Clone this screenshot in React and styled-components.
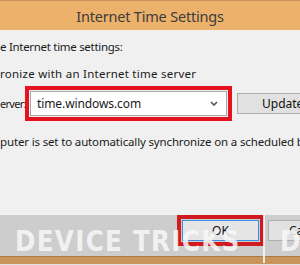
import React from "react";
import styled, { createGlobalStyle } from "styled-components";

const Global = createGlobalStyle`
  html, body { margin: 0; padding: 0; }
  body { width: 300px; height: 265px; overflow: hidden; background: #f0f0f0; }
  #root { width: 300px; height: 265px; }
`;

const Window = styled.div`
  position: relative;
  width: 300px;
  height: 265px;
  display: flex;
  flex-direction: column;
  overflow: hidden;
  font-family: "Noto Sans", "Open Sans", sans-serif;
  color: #1a1a1a;
  background: #f0f0f0;
`;

const TitleBar = styled.div`
  height: 29px;
  flex: none;
  background: #ecb16b;
  border-top: 1px solid #c4925a;
  display: flex;
  align-items: center;
  justify-content: center;
  font-size: 14.5px;
  color: #3c3c3c;
  letter-spacing: -0.2px;
`;

const Body = styled.div`
  flex: 1;
  display: flex;
  flex-direction: column;
  white-space: nowrap;
  overflow: hidden;
  font-size: 11.5px;
`;

const Line = styled.div`
  height: 16px;
  line-height: 16px;
  margin-top: ${(p) => p.$mt}px;
  letter-spacing: ${(p) => p.$ls}px;
`;

const ServerRow = styled.div`
  margin-top: 4px;
  height: 35px;
  display: flex;
  align-items: center;
`;

const Label = styled.span`
  width: 25px;
  flex: none;
  font-size: 11px;
  letter-spacing: -0.7px;
`;

const Highlight = styled.div`
  border: 4px solid #e8121e;
  padding: 1px;
  display: flex;
  flex: none;
`;

const Combo = styled.div`
  height: 23px;
  width: 181px;
  border: 1px solid #a8a8a8;
  background: #fff;
  display: flex;
  align-items: center;
  justify-content: space-between;
  padding: 0 8px 0 6px;
  box-sizing: content-box;
  font-size: 12px;
  letter-spacing: -0.1px;
`;

const Button = styled.div`
  height: 19px;
  flex: none;
  border: 1px solid ${(p) => (p.$focus ? "#3c8ee0" : "#adadad")};
  background: ${(p) => (p.$focus ? "#e5e5e5" : "#e1e1e1")};
  display: flex;
  align-items: center;
  justify-content: ${(p) => p.$align || "center"};
  padding-left: ${(p) => p.$pl || 0}px;
  width: ${(p) => p.$w}px;
  margin-left: ${(p) => p.$ml || 0}px;
  margin-top: ${(p) => p.$mt || 0}px;
  font-size: 12px;
  letter-spacing: 0;
  color: #111;
  box-sizing: content-box;
`;

const Footer = styled.div`
  height: 41px;
  flex: none;
  background: #cdcdcd;
  display: flex;
  align-items: flex-start;
  padding-left: 177px;
  box-sizing: border-box;
`;

const OkHighlight = styled(Highlight)`
  border-color: #cf1a22;
`;

const Frame = styled.div`
  height: 7px;
  flex: none;
  background: #c9955a;
  border-top: 1px solid #a87a45;
`;

const Bottom = styled.div`
  height: 1px;
  flex: none;
  background: #e2e2e2;
`;

const Watermark = styled.div`
  position: absolute;
  left: ${(p) => p.$left}px;
  top: 225px;
  display: flex;
  align-items: center;
  pointer-events: none;
`;

const MarkText = styled.span`
  display: inline-block;
  font-family: "DejaVu Sans", sans-serif;
  font-weight: bold;
  font-size: 29px;
  line-height: 32px;
  color: rgba(248, 248, 248, 0.85);
  white-space: nowrap;
  transform-origin: left center;
  transform: scaleX(0.85);
  letter-spacing: 1.5px;
  width: ${(p) => p.$w}px;
`;

const Divider = styled.div`
  position: absolute;
  left: 263px;
  top: 213px;
  width: 2px;
  height: 50px;
  background: rgba(248, 248, 248, 0.85);
`;

const Chevron = () => (
  <svg width="8" height="5" viewBox="0 0 8 5">
    <path d="M1 1 L4 4 L7 1" fill="none" stroke="#555" strokeWidth="1.6" />
  </svg>
);

export default function App() {
  return (
    <>
      <Global />
      <Window>
        <TitleBar>Internet Time Settings</TitleBar>
        <Body>
          <Line $mt={9} $ls={-0.3}>e Internet time settings:</Line>
          <Line $mt={11} $ls={0.25}>ronize with an Internet time server</Line>
          <ServerRow>
            <Label>erver:</Label>
            <Highlight>
              <Combo>
                <span>time.windows.com</span>
                <Chevron />
              </Combo>
            </Highlight>
            <Button $w={80} $ml={5} $align="flex-start" $pl={24}>Update</Button>
          </ServerRow>
          <Line $mt={13} $ls={-0.15}>puter is set to automatically synchronize on a scheduled basis.</Line>
        </Body>
        <Footer>
          <OkHighlight>
            <Button $focus $w={75}>OK</Button>
          </OkHighlight>
          <Button $w={60} $ml={4} $mt={5} $align="flex-start" $pl={20}>Cancel</Button>
        </Footer>
        <Frame />
        <Bottom />
        <Watermark $left={15}>
          <MarkText $w={260}>DEVICE TRICKS</MarkText>
        </Watermark>
        <Divider />
        <Watermark $left={280}>
          <MarkText $w={40}>D</MarkText>
        </Watermark>
      </Window>
    </>
  );
}
